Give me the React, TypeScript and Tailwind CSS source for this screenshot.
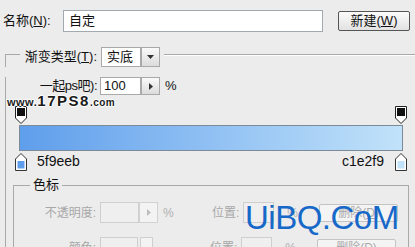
import React from 'react';

const font = { fontFamily: '"Liberation Sans", "Noto Sans CJK SC", sans-serif' };

const TopStop = () => (
  <svg width="12" height="18" viewBox="0 0 12 18">
    <path d="M0.5 0.5 H11.5 V12 L6 17.5 L0.5 12 Z" fill="#fff" stroke="#222" />
    <rect x="2" y="2" width="8" height="8" fill="#111" />
  </svg>
);

const BottomStop = ({ color }: { color: string }) => (
  <svg width="12" height="18" viewBox="0 0 12 18">
    <path d="M6 0.5 L11.5 6 V17.5 H0.5 V6 Z" fill="#fff" stroke="#333" />
    <rect x="2.5" y="8" width="7" height="7.5" fill={color} />
  </svg>
);

const ArrowBtn = ({ down = false, disabled = false }: { down?: boolean; disabled?: boolean }) => (
  <div
    className={`w-[19px] h-full flex items-center justify-center border ${
      disabled ? 'border-[#d2d2d2] bg-[#f3f3f3]' : 'border-[#a9a9a9] bg-gradient-to-b from-[#fafafa] to-[#dcdcdc]'
    }`}
  >
    {down ? (
      <svg width="7" height="4" viewBox="0 0 7 4">
        <path d="M0 0 H7 L3.5 4 Z" fill="#333" />
      </svg>
    ) : (
      <svg width="4" height="7" viewBox="0 0 4 7">
        <path d="M0 0 L4 3.5 L0 7 Z" fill={disabled ? '#bdbdbd' : '#333'} />
      </svg>
    )}
  </div>
);

const Line = () => <div className="flex-1 mt-[7px] border-t border-t-[#a9a9a9] border-b border-b-white" />;

const StopRow = ({ label }: { label: string }) => (
  <div className="flex items-center h-[21px]">
    <div className="w-[86px] text-right pr-[4px] text-[12px] text-[#a8a8a8]">{label}</div>
    <div className="w-[39px] h-full border border-[#cfcfcf] bg-[#efefef]" />
    <ArrowBtn disabled />
    <span className="ml-[5px] w-[49px] text-[12px] text-[#b0b0b0]">%</span>
    <span className="text-[12px] text-[#a8a8a8]">位置:</span>
    <div className="ml-[4px] w-[31px] h-full border border-[#cfcfcf] bg-[#efefef]" />
    <span className="ml-[13px] text-[12px] text-[#b0b0b0]">%</span>
    <div className="ml-[21px] w-[79px] h-[18px] border border-[#c4c4c4] rounded-[2px] bg-[#f4f4f4] flex items-center justify-center text-[12px] text-[#aaaaaa]">
      删除(<span className="underline">D</span>)
    </div>
  </div>
);

export default function App() {
  return (
    <div className="relative w-[415px] h-[247px] overflow-hidden bg-[#ececec] text-[#111]" style={font}>
      {/* name row */}
      <div className="flex items-center pt-[10px] h-[32px]">
        <span className="pl-[3px] w-[63px] text-[13px]">
          名称(<span className="underline">N</span>):
        </span>
        <div className="w-[260px] h-[22px] bg-white border border-[#a3a9b0] flex items-center pl-[5px] text-[13px]">
          自定
        </div>
        <div className="ml-[15px] w-[72px] h-[20px] border border-[#555] rounded-[2px] bg-gradient-to-b from-[#fbfbfb] to-[#e2e2e2] flex items-center justify-center text-[13px]">
          新建(<span className="underline">W</span>)
        </div>
      </div>

      {/* gradient group */}
      <div className="mt-[15px] ml-[5px]">
        <div className="flex items-start h-[20px]">
          <div className="w-[15px] h-[13px] mt-[7px] border-t border-l border-[#a9a9a9]" />
          <div className="w-[81px] text-right pr-[4px] text-[13px] leading-[20px]">
            渐变类型(<span className="underline">T</span>):
          </div>
          <div className="w-[40px] h-[20px] bg-white border border-[#a9a9a9] flex items-center pl-[5px] text-[13px]">
            实底
          </div>
          <ArrowBtn down />
          <div className="w-[4px]" />
          <Line />
        </div>

        <div className="border-l border-[#a9a9a9] h-[180px]">
          <div className="flex items-center h-[18px] mt-[10px]">
            <div className="w-[94px] text-right pr-[3px] text-[13px] tracking-[-0.5px]">一起ps吧):</div>
            <div className="w-[41px] h-full bg-white border border-[#a9a9a9] flex items-center pl-[3px] text-[13px]">
              100
            </div>
            <ArrowBtn />
            <span className="ml-[5px] text-[13px]">%</span>
          </div>

          {/* gradient editor */}
          <div className="ml-[9px] w-[392px] mt-[11px]">
            <div className="flex justify-between h-[17px]">
              <TopStop />
              <TopStop />
            </div>
            <div className="mt-[2px] ml-[4px] w-[384px] h-[26px] border border-[#7d8b98] bg-gradient-to-r from-[#5f9eeb] to-[#c1e2f9]" />
            <div className="mt-[2px] flex items-start h-[17px]">
              <BottomStop color="#5f9eeb" />
              <span className="ml-[10px] text-[14px] leading-[14px] mt-[1px]">5f9eeb</span>
              <span className="ml-auto mr-[11px] text-[14px] leading-[14px] mt-[1px]">c1e2f9</span>
              <BottomStop color="#c1e2f9" />
            </div>
          </div>

          {/* stops group */}
          <div className="ml-[7px] w-[396px] mt-[8px]">
            <div className="flex items-start h-[14px]">
              <div className="w-[17px] h-[7px] mt-[7px] border-t border-l border-[#a9a9a9]" />
              <span className="px-[3px] text-[13px] leading-[14px]">色标</span>
              <div className="flex-1 h-[7px] mt-[7px] border-t border-r border-[#a9a9a9]" />
            </div>
            <div className="border-l border-r border-[#a9a9a9] h-[60px]">
              <div className="pt-[10px]">
                <StopRow label="不透明度:" />
              </div>
              <div className="mt-[14px]">
                <div className="flex items-center h-[21px]">
                  <div className="w-[86px] text-right pr-[4px] text-[12px] text-[#a8a8a8]">颜色:</div>
                  <div className="w-[38px] h-full border border-[#cfcfcf] bg-[#efefef]" />
                  <div className="ml-[2px] w-[13px] h-full border border-[#cfcfcf] bg-[#f3f3f3]" />
                  <span className="ml-[57px] text-[12px] text-[#a8a8a8]">位置:</span>
                  <div className="ml-[4px] w-[31px] h-full border border-[#cfcfcf] bg-[#efefef]" />
                  <span className="ml-[13px] text-[12px] text-[#b0b0b0]">%</span>
                  <div className="ml-[21px] w-[79px] h-[18px] border border-[#c4c4c4] rounded-[2px] bg-[#f4f4f4] flex items-center justify-center text-[12px] text-[#aaaaaa]">
                    删除(<span className="underline">D</span>)
                  </div>
                </div>
              </div>
            </div>
          </div>
        </div>
      </div>

      {/* watermarks */}
      <div
        className="absolute left-[7px] top-[93px] flex items-baseline font-black text-[#1a1a1a] leading-none"
        style={{ textShadow: '1px 0 #fff, -1px 0 #fff, 0 1px #fff, 0 -1px #fff' }}
      >
        <span className="text-[11px] tracking-[0.5px]">www.</span>
        <span className="text-[15px] tracking-[1.5px]">17PS8</span>
        <span className="text-[10px] tracking-[0.5px]">.com</span>
      </div>
      <div className="absolute left-[245px] top-[201px] text-[33px] leading-none text-[#1668c9] tracking-[-0.5px]">
        UiBQ.CoM
      </div>
    </div>
  );
}
